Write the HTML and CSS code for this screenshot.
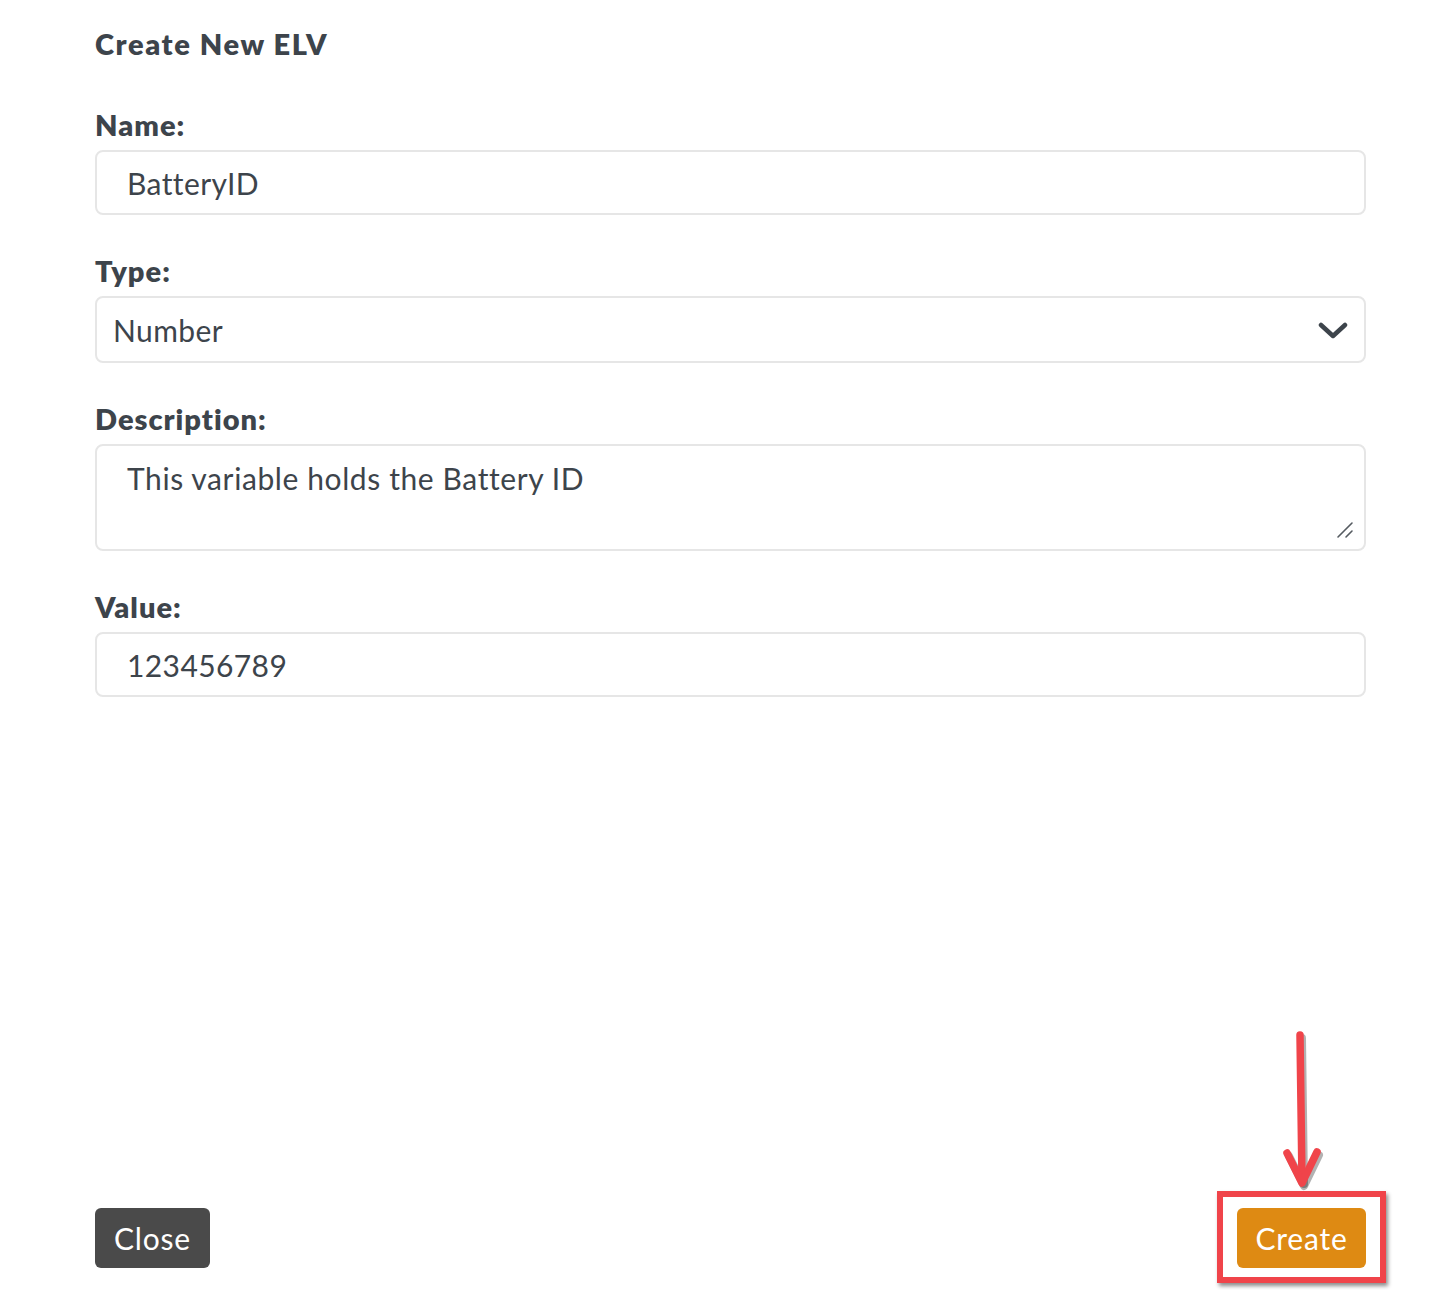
FILE: index.html
```html
<!DOCTYPE html>
<html>
<head>
<meta charset="utf-8">
<link rel="stylesheet" href="styles.css">
</head>
<body>
<div class="modal">
  <h1 class="title">Create New ELV</h1>
  <form class="form">
    <div class="group">
      <label class="label">Name:</label>
      <div class="control"><span class="val indent">BatteryID</span></div>
    </div>
    <div class="group">
      <label class="label">Type:</label>
      <div class="control select">
        <span class="val">Number</span>
        <svg class="chev" width="30" height="18" viewBox="0 0 30 18"><path d="M3 3 L15 14 L27 3" fill="none" stroke="#3d444b" stroke-width="4.5" stroke-linecap="round" stroke-linejoin="round"/></svg>
      </div>
    </div>
    <div class="group">
      <label class="label">Description:</label>
      <div class="area-wrap">
        <textarea class="area">This variable holds the Battery ID</textarea>
        <svg class="grip" width="18" height="18" viewBox="0 0 18 18"><path d="M2 16 L16 2 M10 16 L16 10" stroke="#555b61" stroke-width="1.6" stroke-linecap="round" fill="none"/></svg>
      </div>
    </div>
    <div class="group">
      <label class="label">Value:</label>
      <div class="control"><span class="val indent">123456789</span></div>
    </div>
  </form>
  <div class="footer">
    <button class="btn btn-close" type="button">Close</button>
    <div class="highlight">
      <svg class="arrow" width="60" height="170" viewBox="0 0 60 170">
        <g stroke="rgba(0,0,0,0.3)" stroke-width="8" stroke-linecap="round" stroke-linejoin="round" fill="none" transform="translate(2,3)">
          <path d="M28 6 L30 152"/>
          <path d="M15 124 L30 154 L45 123"/>
        </g>
        <g stroke="#f0444a" stroke-width="7.5" stroke-linecap="round" stroke-linejoin="round" fill="none">
          <path d="M28 6 L30 152"/>
          <path d="M15 124 L30 154 L45 123"/>
        </g>
      </svg>
      <button class="btn btn-create" type="button">Create</button>
    </div>
  </div>
</div>
</body>
</html>
```
FILE: styles.css
```css
html, body {
  margin: 0;
  padding: 0;
  background: #ffffff;
}
body {
  font-family: Lato, "Open Sans", "Liberation Sans", sans-serif;
  color: #3d444b;
}
.modal {
  width: 1271px;
  margin-left: 95px;
  padding-top: 26px;
  padding-bottom: 22px;
  height: 1290px;
  display: flex;
  flex-direction: column;
  box-sizing: border-box;
}
.title {
  margin: 0 0 45px 0;
  font-size: 29px;
  line-height: 36px;
  font-weight: 800;
  letter-spacing: 1.6px;
  color: #3d444b;
}
.form {
  display: flex;
  flex-direction: column;
  gap: 38px;
}
.group {
  display: flex;
  flex-direction: column;
}
.label {
  font-size: 29px;
  line-height: 36px;
  font-weight: 800;
  letter-spacing: 1px;
  margin-bottom: 7px;
  color: #3d444b;
}
.control {
  height: 65px;
  box-sizing: border-box;
  border: 2px solid #e6e6e6;
  border-radius: 8px;
  display: flex;
  align-items: center;
  padding: 0 16px;
  font-size: 30px;
  letter-spacing: 0.4px;
  color: #3d444b;
}
.val.indent {
  padding-left: 14px;
}
.control.select {
  height: 67px;
  justify-content: space-between;
  padding: 0 16px 0 16px;
}
.chev {
  display: block;
  margin-top: 2px;
}
.area-wrap {
  position: relative;
  display: flex;
}
.area {
  flex: 1;
  height: 107px;
  box-sizing: border-box;
  border: 2px solid #e6e6e6;
  border-radius: 8px;
  padding: 14px 30px;
  margin: 0;
  font-family: Lato, "Open Sans", "Liberation Sans", sans-serif;
  font-size: 30px;
  letter-spacing: 0.6px;
  color: #3d444b;
  resize: none;
  outline: none;
  line-height: 36px;
}
.grip {
  position: absolute;
  right: 12px;
  bottom: 12px;
}
.footer {
  margin-top: auto;
  display: flex;
  justify-content: space-between;
  align-items: flex-end;
}
.btn {
  height: 60px;
  border: none;
  border-radius: 6px;
  color: #ffffff;
  font-family: Lato, "Open Sans", "Liberation Sans", sans-serif;
  font-size: 30px;
  letter-spacing: 0.8px;
  padding: 0;
  cursor: pointer;
}
.btn-close {
  width: 115px;
  background: #4a4a4a;
}
.btn-create {
  width: 129px;
  background: #de8a13;
}
.highlight {
  position: relative;
  display: flex;
}
.highlight::after {
  content: "";
  position: absolute;
  left: -20px;
  right: -20px;
  top: -17px;
  bottom: -15px;
  border: 6px solid #f0444a;
  box-shadow: 2px 3px 4px rgba(0, 0, 0, 0.45);
  pointer-events: none;
}
.arrow {
  position: absolute;
  left: 35px;
  top: -179px;
}
```
